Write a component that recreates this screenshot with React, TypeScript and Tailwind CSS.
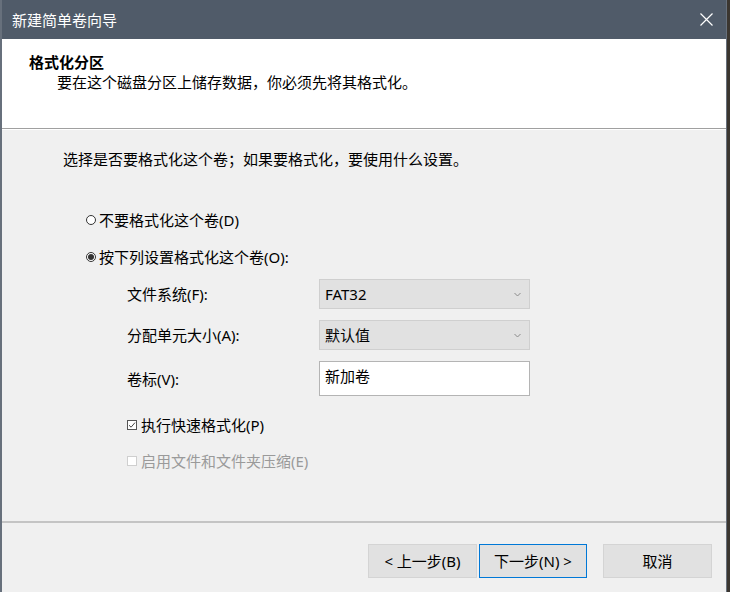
const font = "font-['Noto_Sans','Noto_Sans_CJK_SC',sans-serif]";

function Radio({ checked }: { checked?: boolean }) {
  return (
    <span className="mr-[3px] flex h-[10px] w-[10px] items-center justify-center rounded-full border border-[#333] bg-white">
      {checked && <span className="h-[6px] w-[6px] rounded-full bg-[#333]" />}
    </span>
  );
}

function Check({ checked, disabled }: { checked?: boolean; disabled?: boolean }) {
  return (
    <span
      className={
        disabled
          ? "mr-[4px] flex h-[10px] w-[10px] items-center justify-center border border-[#cfcfcf] bg-white"
          : "mr-[4px] flex h-[10px] w-[10px] items-center justify-center border border-[#555] bg-white"
      }
    >
      {checked && (
        <svg width="8" height="8" viewBox="0 0 8 8">
          <path d="M1 4.2 L3.1 6.2 L7 1.6" fill="none" stroke="#444" strokeWidth="1" />
        </svg>
      )}
    </span>
  );
}

function Select({ value }: { value: string }) {
  return (
    <div className="flex h-[30px] w-[211px] items-center justify-between border border-[#cfcfcf] bg-[#e1e1e1] pl-[5px] pr-[8px]">
      <span className="text-[15px] leading-[20px] text-black">{value}</span>
      <svg width="7" height="5" viewBox="0 0 7 5">
        <path d="M0.5 1 L3.5 4 L6.5 1" fill="none" stroke="#8a8a8a" strokeWidth="1" />
      </svg>
    </div>
  );
}

function Button({ label, focused }: { label: string; focused?: boolean }) {
  return (
    <div
      className={
        focused
          ? "flex h-[34px] w-[108px] items-center justify-center border border-[#0078d7] bg-[#e1e1e1] text-[15px] text-black"
          : "flex h-[34px] w-[109px] items-center justify-center border border-[#d4d4d4] bg-[#e1e1e1] text-[15px] text-black"
      }
    >
      {label}
    </div>
  );
}

export default function App() {
  return (
    <div className={`flex h-[592px] w-[730px] overflow-hidden bg-[#3b3630] ${font}`}>
      <div className="flex h-full w-[727px] flex-col border-l-2 border-r border-[#67707c] bg-[#f0f0f0]">
        <div className="flex h-[39px] shrink-0 items-center justify-between bg-[#505b69] pl-[10px] pr-[13px]">
          <span className="text-[15px] leading-[20px] text-white">新建简单卷向导</span>
          <svg width="13" height="13" viewBox="0 0 13 13">
            <path d="M0.5 0.5 L12.5 12.5 M12.5 0.5 L0.5 12.5" stroke="#fff" strokeWidth="1.2" />
          </svg>
        </div>

        <div className="flex h-[89px] shrink-0 flex-col bg-white pl-[27px] pt-[13px]">
          <span className="text-[15px] font-bold leading-[20px] text-black">格式化分区</span>
          <span className="pl-[28px] text-[15px] leading-[20px] text-black">
            要在这个磁盘分区上储存数据，你必须先将其格式化。
          </span>
        </div>
        <div className="h-px shrink-0 bg-[#a0a0a0]" />
        <div className="h-px shrink-0 bg-white" />

        <div className="flex h-[391px] shrink-0 flex-col pl-[61px] pt-[19px] text-[15px] leading-[20px] text-black">
          <span>选择是否要格式化这个卷；如果要格式化，要使用什么设置。</span>

          <div className="mt-[41px] flex items-center pl-[23px]">
            <Radio />
            <span>不要格式化这个卷(D)</span>
          </div>
          <div className="mt-[17px] flex items-center pl-[23px]">
            <Radio checked />
            <span>按下列设置格式化这个卷(O):</span>
          </div>

          <div className="mt-[12px] grid grid-cols-[192px_211px] items-center gap-y-[11px] pl-[64px]">
            <span>文件系统(F):</span>
            <Select value="FAT32" />
            <span>分配单元大小(A):</span>
            <Select value="默认值" />
            <span>卷标(V):</span>
            <div className="flex h-[35px] w-[211px] items-start border border-[#b4b4b4] bg-white pl-[5px] pt-[4px]">
              新加卷
            </div>
          </div>

          <div className="mt-[19px] flex items-center pl-[64px]">
            <Check checked />
            <span>执行快速格式化(P)</span>
          </div>
          <div className="mt-[16px] flex items-center pl-[64px] text-[#9a9a9a]">
            <Check disabled />
            <span>启用文件和文件夹压缩(E)</span>
          </div>
        </div>

        <div className="h-[2px] shrink-0 bg-[#c4c4c4]" />

        <div className="flex shrink-0 justify-end pr-[14px] pt-[21px]">
          <Button label="< 上一步(B)" />
          <div className="ml-[2px]">
            <Button label="下一步(N) >" focused />
          </div>
          <div className="ml-[16px]">
            <Button label="取消" />
          </div>
        </div>
      </div>
    </div>
  );
}
